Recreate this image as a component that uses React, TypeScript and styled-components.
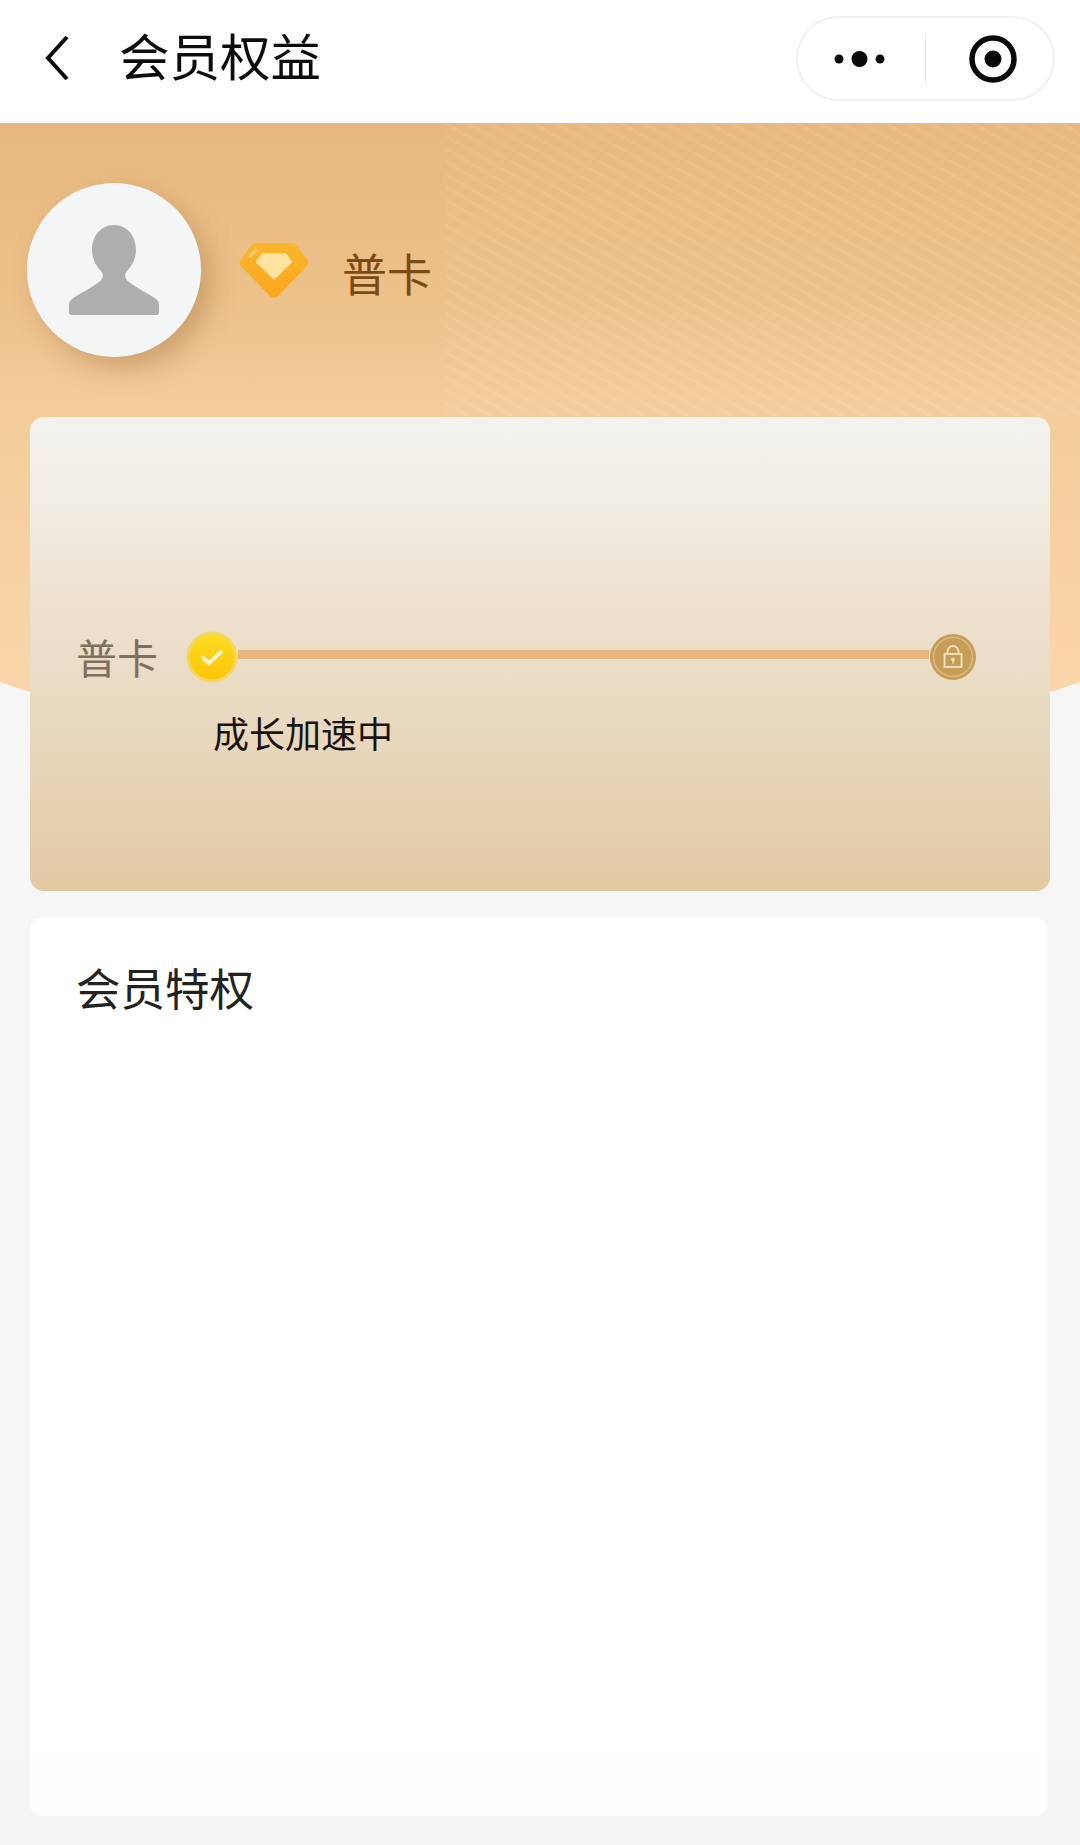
import React from 'react';
import styled, { createGlobalStyle } from 'styled-components';

const GlobalStyle = createGlobalStyle`
html, body {
  margin: 0;
  padding: 0;
  background: #f6f6f7;
}
* {
  box-sizing: border-box;
}
`;

const Page = styled.div`
position: relative;
width: 1080px;
height: 1845px;
overflow: hidden;
background: linear-gradient(180deg, #f6f6f7 0%, #f6f6f7 94%, #f3f4f4 100%);
font-family: "Noto Sans CJK SC", "Noto Sans", sans-serif;
`;

const NavBar = styled.div`
position: relative;
height: 123px;
background: #fff;
display: flex;
align-items: center;
justify-content: space-between;
padding: 0 25px 6px 45px;
`;

const NavLeft = styled.div`
display: flex;
align-items: center;
gap: 50px;
`;

const BackIcon = styled.svg`
margin-top: -2px;
`;

const NavTitle = styled.h1`
font-size: 50.500px;
font-weight: 400;
line-height: 60px;
margin: -9px 0 0 0;
color: #0c0c0c;
`;

const Capsule = styled.div`
width: 259px;
height: 85px;
border: 2px solid #f0f0f0;
border-radius: 43px;
background: #fff;
display: flex;
align-items: center;
`;

const CapsuleCell = styled.div`
flex: 1;
display: flex;
align-items: center;
justify-content: center;
`;

const CapsuleDivider = styled.div`
width: 1px;
height: 50px;
background: #e8e8e8;
`;

const MoreIcon = styled.svg`
margin-right: 3px;
`;

const RecordIcon = styled.svg`
margin-left: 6px;
`;

const HeroBackdrop = styled.div`
position: absolute;
top: 123px;
left: -160px;
width: 1400px;
height: 632px;
background: linear-gradient(180deg, #e7b87e 0%, #ecc18a 27%, #f3cc9a 45%, #f9d4a7 80%, #fbd8ac 100%);
border-radius: 0 0 50% 50% / 0 0 200px 200px;
overflow: hidden;
`;

const HeroStripes = styled.div`
position: absolute;
top: 0;
right: 160px;
width: 635px;
height: 294px;
background: repeating-linear-gradient(
  30deg,
  rgba(255, 255, 255, 0.08) 0,
  rgba(255, 255, 255, 0.08) 3px,
  rgba(255, 255, 255, 0.01) 3px,
  rgba(255, 255, 255, 0.01) 11px
);
`;

const Profile = styled.div`
position: relative;
display: flex;
align-items: center;
padding: 60px 0 0 27px;
`;

const Avatar = styled.div`
width: 174px;
height: 174px;
border-radius: 50%;
background: #f4f5f7;
box-shadow: 10px 12px 26px rgba(150, 105, 55, 0.38);
display: flex;
align-items: center;
justify-content: center;
`;

const Diamond = styled.svg`
margin-left: 37px;
margin-top: 0;
`;

const CardName = styled.span`
font-size: 45px;
line-height: 56px;
margin-left: 32px;
margin-top: 6px;
color: #7d4a14;
`;

const LevelCard = styled.section`
position: relative;
margin: 60px 30px 0;
height: 474px;
border-radius: 14px;
background: linear-gradient(180deg, #f4f2ee 0%, #f2eee6 17%, #ede1d0 39%, #e8d7bc 70%, #e2c8a2 100%);
padding: 214px 73px 0 46px;
`;

const Track = styled.div`
display: flex;
align-items: center;
`;

const LevelName = styled.span`
font-size: 41px;
line-height: 50px;
margin-top: -3px;
margin-right: 28px;
color: #7d705f;
`;

const Line = styled.div`
flex: 1;
height: 9px;
margin-top: -5px;
background: #e8b77e;
`;

const GrowthText = styled.div`
margin: 25px 0 0 137px;
font-size: 36px;
line-height: 48px;
color: #1a1410;
`;

const PrivilegeCard = styled.section`
position: relative;
margin: 27px 33px 0 30px;
height: 898px;
border-radius: 12px;
background: linear-gradient(180deg, #fff 0%, #fff 88%, #fdfefe 100%);
padding: 39px 46px;
`;

const PrivilegeTitle = styled.h2`
font-size: 44.500px;
font-weight: 400;
line-height: 60px;
margin: 0;
color: #222;
`;

export default function App() {
  return (
    <Page>
      <GlobalStyle />
      <HeroBackdrop>
        <HeroStripes />
      </HeroBackdrop>
      <NavBar>
        <NavLeft>
          <BackIcon width="24" height="46" viewBox="0 0 24 46" fill="none">
            <path d="M22 2 L3 23 L22 44" stroke="#0c0c0c" strokeWidth="4" />
          </BackIcon>
          <NavTitle>会员权益</NavTitle>
        </NavLeft>
        <Capsule>
          <CapsuleCell>
            <MoreIcon width="52" height="18" viewBox="0 0 52 18">
              <circle cx="5" cy="9" r="4.5" fill="#0a0a0a" />
              <circle cx="25.500" cy="9" r="8" fill="#0a0a0a" />
              <circle cx="46" cy="9" r="4.500" fill="#0a0a0a" />
            </MoreIcon>
          </CapsuleCell>
          <CapsuleDivider />
          <CapsuleCell>
            <RecordIcon width="48" height="48" viewBox="0 0 48 48">
              <circle cx="24" cy="24" r="21" fill="none" stroke="#0a0a0a" strokeWidth="5.500" />
              <circle cx="24" cy="24" r="8.500" fill="#0a0a0a" />
            </RecordIcon>
          </CapsuleCell>
        </Capsule>
      </NavBar>
      <Profile>
        <Avatar>
          <svg width="90" height="90" viewBox="0 0 90 90">
            <path
              d="M45 0 C58 0 67 11 67 25 C67 33 63 41 58 46 C55 50 56 54 60 57 C68 63 80 69 87 74 Q90 76 90 79 L90 87 Q90 90 87 90 L3 90 Q0 90 0 87 L0 79 Q0 76 3 74 C10 69 22 63 30 57 C34 54 35 50 32 46 C27 41 23 33 23 25 C23 11 32 0 45 0 Z"
              fill="#adafaf"
            />
          </svg>
        </Avatar>
        <Diamond width="72" height="57" viewBox="0 0 70 56">
          <defs>
            <linearGradient id="gem" x1="0" y1="0" x2="0" y2="1">
              <stop offset="0" stopColor="#fcb62c" />
              <stop offset="1" stopColor="#f9a61d" />
            </linearGradient>
            <filter id="soft" x="-5%" y="-5%" width="110%" height="110%">
              <feGaussianBlur stdDeviation="0.700" />
            </filter>
          </defs>
          <g filter="url(#soft)">
            <path
              d="M18 1 L52 1 Q55 1 57 3 L68 18 Q70 21 67 24 L40 52 Q35 57 30 52 L3 24 Q0 21 2 18 L13 3 Q15 1 18 1 Z"
              fill="url(#gem)"
            />
            <path d="M23 11 L47 11 L53 20 L35 37 L17 20 Z" fill="#fde2a0" />
            <path d="M11 15 L18 7" stroke="#fdd58a" strokeWidth="2.500" />
          </g>
        </Diamond>
        <CardName>普卡</CardName>
      </Profile>
      <LevelCard>
        <Track>
          <LevelName>普卡</LevelName>
          <svg width="52" height="52" viewBox="0 0 52 52">
            <defs>
              <linearGradient id="coin" x1="0" y1="0" x2="0" y2="1">
                <stop offset="0" stopColor="#fbdc22" />
                <stop offset="1" stopColor="#fcc508" />
              </linearGradient>
            </defs>
            <circle cx="26" cy="26" r="25.500" fill="#f2d860" />
            <circle cx="26" cy="26" r="22.500" fill="url(#coin)" />
            <path d="M16 26 L23 32 L36 20" fill="none" stroke="#fdf3c8" strokeWidth="4" />
          </svg>
          <Line />
          <svg width="48" height="48" viewBox="0 0 48 48">
            <circle cx="24" cy="24" r="23" fill="#c59d56" />
            <circle cx="24" cy="24" r="19.500" fill="none" stroke="#dcbc80" strokeWidth="1.500" />
            <rect x="15.500" y="21" width="17" height="13" fill="none" stroke="#f4e3c0" strokeWidth="1.800" />
            <path d="M18.500 21 V18.500 A5.500 5.500 0 0 1 29.500 18.500 V21" fill="none" stroke="#f4e3c0" strokeWidth="1.800" />
            <circle cx="24" cy="26.500" r="1.800" fill="#f4e3c0" />
            <path d="M24 26.500 V30.500" stroke="#f4e3c0" strokeWidth="1.500" />
          </svg>
        </Track>
        <GrowthText>成长加速中</GrowthText>
      </LevelCard>
      <PrivilegeCard>
        <PrivilegeTitle>会员特权</PrivilegeTitle>
      </PrivilegeCard>
    </Page>
  );
}
